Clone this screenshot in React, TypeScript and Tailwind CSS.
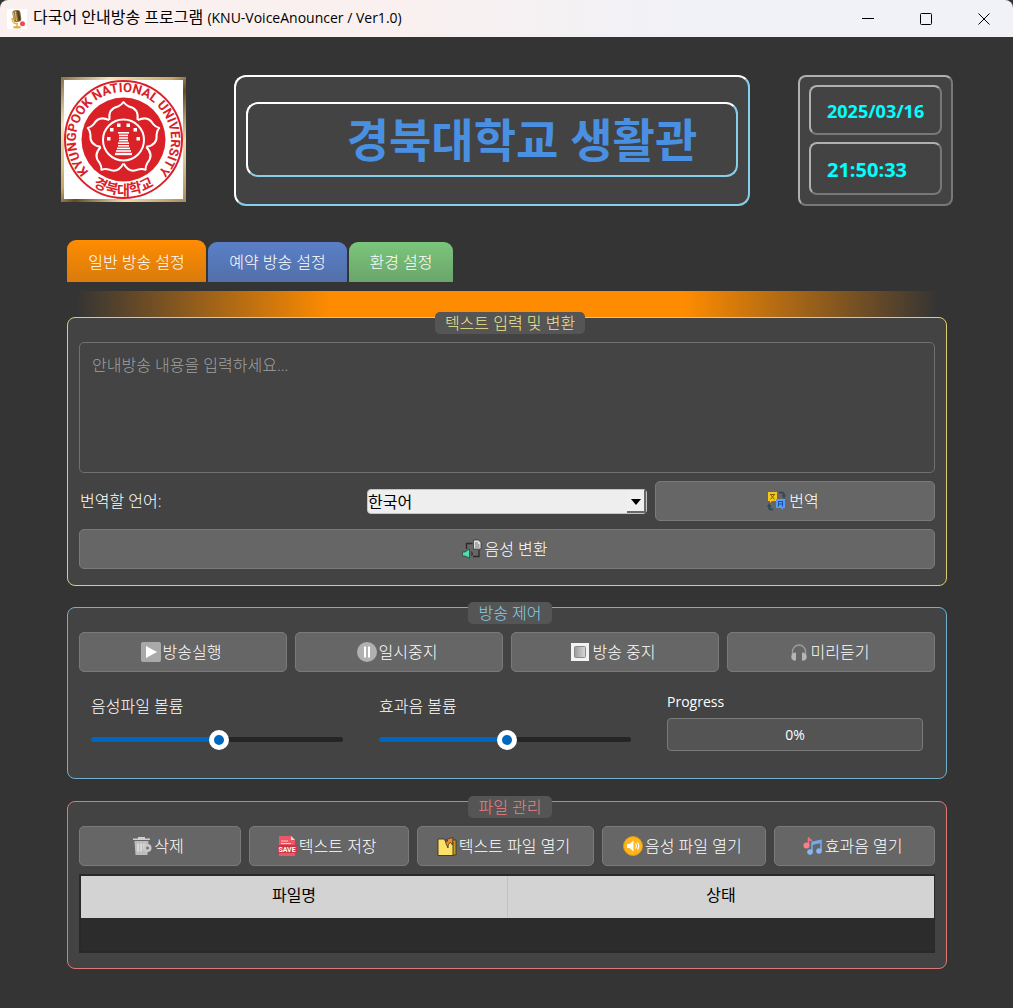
import { useState } from "react";
import type { ReactNode } from "react";

const SANS = "font-['Open_Sans','Noto_Sans_CJK_KR',sans-serif]";

function MicIcon() {
  return (
    <svg viewBox="0 0 20 20" className="size-5 shrink-0" aria-hidden="true">
      <rect width="20" height="20" fill="#fff" />
      <g transform="rotate(-8 10 8)">
        <rect x="6" y="1" width="8" height="12" rx="3" fill="#8a6a3a" />
        <path d="M7 3v8M9 2v10" stroke="#d9b35c" strokeWidth="1.2" />
        <path d="M12 2v10" stroke="#4a3c28" strokeWidth="2" />
      </g>
      <path d="M5 9c0 5 3 6 6 5.500M10 14v4" stroke="#e5b44c" strokeWidth="1.500" fill="none" />
      <ellipse cx="10" cy="18.300" rx="4" ry="1.200" fill="#e0ad45" />
      <circle cx="15.500" cy="14.800" r="2.500" fill="#ee4a55" />
    </svg>
  );
}

function Seal() {
  const petals = [0, 72, 144, 216, 288];
  return (
    <svg viewBox="0 0 125 125" className="size-[125px] shrink-0" role="img" aria-label="경북대학교">
      <defs>
        <linearGradient id="gold" x1="0" y1="0" x2="1" y2="1">
          <stop offset="0" stopColor="#8a7045" />
          <stop offset="0.200" stopColor="#f6e3b8" />
          <stop offset="0.450" stopColor="#c9a566" />
          <stop offset="0.550" stopColor="#5e4a2b" />
          <stop offset="0.750" stopColor="#f3dcae" />
          <stop offset="1" stopColor="#a98a55" />
        </linearGradient>
        <path id="arcTop" d="M27.500 94.600 A47.500 47.500 0 1 1 97.500 94.600" />
        <path id="arcBottom" d="M22 100 A55.500 55.500 0 0 0 103 100" />
      </defs>
      <rect width="125" height="125" fill="url(#gold)" />
      <rect x="3" y="3" width="119" height="119" fill="#fff" />
      <circle cx="62.500" cy="62.500" r="58.500" fill="#fff" stroke="#da2128" strokeWidth="2" />
      <circle cx="62.500" cy="62.500" r="42" fill="#da2128" />
      <g fill="none" stroke="#fff" strokeWidth="2" strokeLinejoin="round">
        {petals.map((a) => (
          <path
            key={a}
            transform={`rotate(${a} 62.500 62.500)`}
            d="M48.500 43 C47.500 36 50 31 57 29.500 Q60.500 28 62.500 25 Q64.500 28 68 29.500 C75 31 77.500 36 76.500 43"
          />
        ))}
      </g>
      <circle cx="62.500" cy="63" r="20.500" fill="#da2128" stroke="#fff" strokeWidth="2" />
      <g fill="#fff">
        <rect x="57" y="55" width="11" height="1.600" />
        <rect x="58" y="57.600" width="9" height="1.600" />
        <rect x="58" y="60.200" width="9" height="1.600" />
        <rect x="58" y="62.800" width="9" height="1.600" />
        <rect x="57" y="65.400" width="11" height="1.600" />
        <rect x="57" y="68" width="11" height="1.600" />
        <rect x="56" y="70.600" width="13" height="1.600" />
        <rect x="55" y="73.200" width="15" height="1.600" />
        <rect x="54" y="75.800" width="17" height="2.400" />
        <rect x="46" y="60" width="3.500" height="3.500" />
        <rect x="49" y="51" width="3.500" height="3.500" />
        <rect x="56" y="46.500" width="3.500" height="3.500" />
        <rect x="65.500" y="46.500" width="3.500" height="3.500" />
        <rect x="72.500" y="51" width="3.500" height="3.500" />
        <rect x="75.500" y="60" width="3.500" height="3.500" />
      </g>
      <text fill="#da2128" fontSize="13" fontWeight="700" fontFamily="Roboto, sans-serif" textAnchor="middle">
        <textPath href="#arcTop" startOffset="50%">KYUNGPOOK NATIONAL UNIVERSITY</textPath>
      </text>
      <text fill="#da2128" fontSize="14" fontWeight="700" fontFamily="'Noto Sans CJK KR', sans-serif" textAnchor="middle">
        <textPath href="#arcBottom" startOffset="50%">경북대학교</textPath>
      </text>
    </svg>
  );
}

function Icon({ children }: { children: ReactNode }) {
  return (
    <svg viewBox="0 0 20 20" className="size-5 shrink-0" aria-hidden="true">
      {children}
    </svg>
  );
}

const translateIcon = (
  <Icon>
    <path d="M1 1h9v9H5l-2 2v-2H1z" fill="#f5c61d" />
    <path d="M3 3.500h5M3.500 8.500l4-5M3.500 3.500l4 5" stroke="#7a6410" strokeWidth="1" fill="none" />
    <path d="M9 8h9v9h-2v2l-2-2H9z" fill="#5b9bf8" />
    <path d="M11.500 15.500v-5h4v5M11.500 13h4" stroke="#1e4fa0" strokeWidth="1.100" fill="none" />
    <path d="M12 1.500h3q2 0 2 3.500M15.500 4l1.500 2 1-2M6 18.500H4q-2 0-2-3M1 16l1-2 1.500 2" stroke="#2f4a5c" strokeWidth="2" fill="none" />
  </Icon>
);

const speechIcon = (
  <Icon>
    <path d="M4.500 10V4.500h6M17 11v6.500h-6" stroke="#2b2b2b" strokeWidth="1.300" fill="none" />
    <path d="M11.500 1h5l2.500 2.500V10h-7.500z" fill="#e3e3e3" stroke="#333" strokeWidth="0.800" />
    <path d="M13 4h3M13 6h4.500M13 8h4.500" stroke="#666" strokeWidth="0.900" />
    <path d="M0.500 13h2.500L7.500 10v9L3 17H0.500z" fill="#4fe0ae" stroke="#23483c" strokeWidth="0.800" />
    <path d="M9.500 12.500q1.500 2 0 4" stroke="#2b2b2b" strokeWidth="1.200" fill="none" />
  </Icon>
);

const playIcon = (
  <Icon>
    <rect width="20" height="20" rx="2" fill="#a9a9a9" />
    <path d="M5 4v12l11-6z" fill="#fff" />
  </Icon>
);

const pauseIcon = (
  <Icon>
    <circle cx="10" cy="10" r="10" fill="#b1b1b1" />
    <path d="M8 4.500v11M12 4.500v11" stroke="#fff" strokeWidth="2" />
  </Icon>
);

const stopIcon = (
  <Icon>
    <defs>
      <linearGradient id="stopFill">
        <stop offset="0" stopColor="#9a9a9a" />
        <stop offset="1" stopColor="#d8d8d8" />
      </linearGradient>
    </defs>
    <rect x="1" y="1" width="18" height="18" fill="#f3f3f3" />
    <rect x="4.500" y="4.500" width="11" height="11" rx="1" fill="url(#stopFill)" stroke="#8a8a8a" />
  </Icon>
);

const headphoneIcon = (
  <Icon>
    <path d="M3.500 13V9.500a6.500 6.500 0 0 1 13 0V13" stroke="#9c9c9c" strokeWidth="1.400" fill="none" />
    <path d="M7 10.500v8H4.500A3.500 4 0 0 1 4.500 11zM13 10.500v8h2.500a3.500 4 0 0 0 0-7.500z" fill="#b5b5b5" />
  </Icon>
);

const trashIcon = (
  <Icon>
    <path d="M1 4V2.500h5V1h7v1.500h5V4z" fill="#cfcfcf" />
    <path d="M2.500 5h14L15.500 19h-12z" fill="#bdbdbd" />
    <path d="M6 7.500v8M9 7.500v8M12 7.500v6" stroke="#eee" strokeWidth="1.100" />
    <circle cx="15.500" cy="12" r="4" fill="#c9c9c9" />
    <circle cx="15.500" cy="12" r="1.500" fill="#777" />
  </Icon>
);

const saveIcon = (
  <Icon>
    <path d="M2 0h12l4 4v16H2z" fill="#ec5766" />
    <path d="M14 0l4 4h-4z" fill="#f7d6d8" />
    <path d="M4 5h7M4 7.500h10" stroke="#f8c9cd" strokeWidth="1" />
    <rect y="9" width="20" height="8" rx="1" fill="#c9364a" />
    <text x="10" y="15.500" fontSize="7" fontWeight="700" fontFamily="Roboto, sans-serif" fill="#fff" textAnchor="middle">
      SAVE
    </text>
  </Icon>
);

const folderIcon = (
  <Icon>
    <path d="M12 4h7v15h-5z" fill="#c79a1e" stroke="#3a3320" strokeWidth="0.800" />
    <path d="M1 3h6l2 3h7v13.500H1z" fill="#fbe266" stroke="#3a3320" strokeWidth="0.900" />
    <path d="M8.500 6.500l2.500 5.500c0-3 .5-5 2.500-5.500l2 2.500.5-7.500-7 2 2 1z" fill="#f08a2c" stroke="#3a3320" strokeWidth="0.800" strokeLinejoin="round" />
  </Icon>
);

const speakerIcon = (
  <Icon>
    <circle cx="10" cy="10" r="9.500" fill="#ffb61c" stroke="#d69a1a" />
    <path d="M4 8h2.500L10.500 4.500v11L6.500 12H4z" fill="#fff" />
    <path d="M12.500 7.500q1.800 2.500 0 5M14.500 6.500q2.500 3.500 0 7" stroke="#fff" strokeWidth="1.200" fill="none" />
  </Icon>
);

const notesIcon = (
  <Icon>
    <path d="M5.500 9.500V1.500q1 3 3.500 3" stroke="#f2717c" strokeWidth="1.600" fill="none" />
    <circle cx="3.500" cy="9.500" r="3" fill="#f98088" />
    <path d="M9 16V6.500l9-2V14.500" stroke="#74a9ee" strokeWidth="1.600" fill="none" />
    <path d="M9 6l9-2v3l-9 2z" fill="#74a9ee" />
    <circle cx="7" cy="16" r="2.800" fill="#85b6f5" />
    <circle cx="16" cy="15" r="2.800" fill="#85b6f5" />
  </Icon>
);

function ActionButton({ icon, children }: { icon: ReactNode; children: ReactNode }) {
  return (
    <button
      type="button"
      className="flex h-10 w-full items-center justify-center gap-0.5 rounded-[5px] border border-[#7a7a7a] bg-[#666] pr-1 text-white hover:bg-[#707070]"
    >
      {icon}
      <span className="whitespace-nowrap">{children}</span>
    </button>
  );
}

function Panel({ title, tone, className, children }: { title: string; tone: string; className: string; children: ReactNode }) {
  return (
    <section className={`flex flex-col gap-2 rounded-lg border bg-[#434343] px-[11px] ${tone} ${className}`}>
      <h2 className="relative z-10 -mt-1.5 ml-1.5 flex h-[22px] items-center self-center rounded-[5px] bg-[#555] px-2.5">{title}</h2>
      {children}
    </section>
  );
}

function Volume({ id, label }: { id: string; label: string }) {
  const [value, setValue] = useState(51);
  return (
    <div className="flex flex-col px-3 pt-2">
      <label htmlFor={id} className="leading-6">
        {label}
      </label>
      <input
        id={id}
        type="range"
        min={0}
        max={100}
        value={value}
        onChange={(e) => setValue(Number(e.target.value))}
        style={{ backgroundSize: `${value}% 100%` }}
        className="mt-[19px] mr-1 h-[5px] appearance-none rounded-sm bg-[#252525] bg-linear-to-r from-[#0067c0] to-[#0067c0] bg-no-repeat [&::-webkit-slider-thumb]:size-5 [&::-webkit-slider-thumb]:appearance-none [&::-webkit-slider-thumb]:rounded-full [&::-webkit-slider-thumb]:border-[5px] [&::-webkit-slider-thumb]:border-white [&::-webkit-slider-thumb]:bg-[#0067c0]"
      />
    </div>
  );
}

export default function App() {
  return (
    <div className={`min-h-screen bg-[#343434] text-base font-light text-white ${SANS}`}>
      <header className="flex h-[37px] items-center rounded-t-lg bg-linear-to-r from-[#f9f0ef] from-40% to-[#f0f2f8] to-70% pl-[7px] text-black">
        <MicIcon />
        <h1 className="ml-1.5 flex-1 pb-1 font-normal">
          다국어 안내방송 프로그램 <span className="text-sm">(KNU-VoiceAnouncer / Ver1.0)</span>
        </h1>
        <button type="button" aria-label="최소화" className="flex h-full w-[58px] items-center justify-center">
          <svg viewBox="0 0 12 12" className="size-3" fill="none" stroke="#000">
            <path d="M0 5.500h12" />
          </svg>
        </button>
        <button type="button" aria-label="최대화" className="flex h-full w-[58px] items-center justify-center">
          <svg viewBox="0 0 12 12" className="size-3" fill="none" stroke="#000">
            <rect x="0.500" y="0.500" width="11" height="11" rx="1" />
          </svg>
        </button>
        <button type="button" aria-label="닫기" className="flex h-full w-[58px] items-center justify-center">
          <svg viewBox="0 0 12 12" className="size-3" fill="none" stroke="#000">
            <path d="M0.500 0.500l11 11M11.500 0.500l-11 11" />
          </svg>
        </button>
      </header>

      <main>
        <div className="flex items-start gap-12 pt-[38px] pr-[60px] pl-[61px]">
          <div className="pt-0.5">
            <Seal />
          </div>
          <div className="flex h-[131px] min-w-0 flex-1 items-start rounded-xl border-2 border-t-white border-r-[#87ceeb] border-b-[#87ceeb] border-l-white bg-[#434343] px-[10px] pt-[25px]">
            <div className="flex h-[75px] w-full items-center justify-center rounded-xl border-2 border-t-white border-r-[#87ceeb] border-b-[#87ceeb] border-l-white pb-0.5 pl-[60px]">
              <p className="text-[46px] leading-none font-bold whitespace-nowrap text-[#4a90e2]">경북대학교 생활관</p>
            </div>
          </div>
          <div className="flex w-[155px] shrink-0 flex-col gap-[7px] rounded-lg border-2 border-t-[#b0b0b0] border-r-[#787878] border-b-[#787878] border-l-[#b0b0b0] bg-[#434343] p-[9px] pt-2 font-bold text-[#0ff]">
            <time className="flex h-[50px] items-center rounded-lg border-2 border-t-[#b0b0b0] border-r-[#787878] border-b-[#787878] border-l-[#b0b0b0] pt-0.5 pl-4 text-lg">
              2025/03/16
            </time>
            <time className="flex h-[53px] items-center rounded-lg border-2 border-t-[#b0b0b0] border-r-[#787878] border-b-[#787878] border-l-[#b0b0b0] pt-0.5 pl-4 text-xl">
              21:50:33
            </time>
          </div>
        </div>

        <div className="pt-[34px] pr-[66px] pb-4 pl-[67px]">
          <nav className="flex h-[42px] items-end gap-0.5" role="tablist" aria-label="설정">
            <button type="button" role="tab" aria-selected="true" className="h-[42px] w-[139px] rounded-t-[9px] bg-linear-to-b from-[#ff8c00] to-[#d97b0c] pt-0.5">
              일반 방송 설정
            </button>
            <button type="button" role="tab" aria-selected="false" className="h-10 w-[139px] rounded-t-[9px] bg-linear-to-b from-[#5a7fc8] to-[#5270a8]">
              예약 방송 설정
            </button>
            <button type="button" role="tab" aria-selected="false" className="h-10 w-[104px] rounded-t-[9px] bg-linear-to-b from-[#7bc67b] to-[#6ba56b]">
              환경 설정
            </button>
          </nav>

          <div className="mt-[9px] h-[26px] bg-[linear-gradient(to_right,#343434_1%,#ff8c00_30%,#ff8c00_70%,#343434_99%)]" />

          <Panel title="텍스트 입력 및 변환" tone="border-[#d8cf70] text-[#f0e68c]" className="pb-4">
            <textarea
              aria-label="안내방송 내용"
              placeholder="안내방송 내용을 입력하세요..."
              className="h-[131px] resize-none rounded-[5px] border border-[#707070] bg-[#444] px-3 py-2.5 text-white placeholder:text-[#a0a0a0]"
            />
            <div className="grid grid-cols-3 items-center gap-2 text-white">
              <label htmlFor="lang" className="pl-px">
                번역할 언어:
              </label>
              <div className="relative flex h-[25px] rounded-sm border border-[#c4c4c4] bg-[#eee]">
                <select id="lang" className="w-full appearance-none pb-0.5 font-normal text-black">
                  <option>한국어</option>
                </select>
                <span className="pointer-events-none absolute inset-y-0 right-0 flex w-[19px] items-center justify-center border-r-2 border-b-2 border-[#696969] bg-[#f0f0f0] pt-1">
                  <svg viewBox="0 0 10 6" className="h-1.5 w-2.5">
                    <path d="M0 0h10L5 6z" fill="#000" />
                  </svg>
                </span>
              </div>
              <ActionButton icon={translateIcon}>번역</ActionButton>
            </div>
            <ActionButton icon={speechIcon}>음성 변환</ActionButton>
          </Panel>

          <Panel title="방송 제어" tone="border-[#6fb0cc] text-[#87ceeb]" className="mt-[21px] h-[172px]">
            <div className="grid grid-cols-4 gap-2">
              <ActionButton icon={playIcon}>방송실행</ActionButton>
              <ActionButton icon={pauseIcon}>일시중지</ActionButton>
              <ActionButton icon={stopIcon}>방송 중지</ActionButton>
              <ActionButton icon={headphoneIcon}>미리듣기</ActionButton>
            </div>
            <div className="grid grid-cols-3 gap-2 pt-1.5 text-white">
              <Volume id="voice-volume" label="음성파일 볼륨" />
              <Volume id="effect-volume" label="효과음 볼륨" />
              <div className="flex flex-col gap-1.5 px-3 pt-1.5">
                <span id="progress-label" className="text-sm leading-5 font-normal">
                  Progress
                </span>
                <div
                  role="progressbar"
                  aria-labelledby="progress-label"
                  aria-valuenow={0}
                  className="flex h-[33px] items-center justify-center rounded-sm border border-[#7a7a7a] bg-[#545454] text-sm font-normal"
                >
                  0%
                </div>
              </div>
            </div>
          </Panel>

          <Panel title="파일 관리" tone="border-[#e07878] text-[#f08080]" className="mt-[22px] pb-[15px]">
            <div className="grid grid-cols-[162fr_160fr_178fr_164fr_161fr] gap-2">
              <ActionButton icon={trashIcon}>삭제</ActionButton>
              <ActionButton icon={saveIcon}>텍스트 저장</ActionButton>
              <ActionButton icon={folderIcon}>텍스트 파일 열기</ActionButton>
              <ActionButton icon={speakerIcon}>음성 파일 열기</ActionButton>
              <ActionButton icon={notesIcon}>효과음 열기</ActionButton>
            </div>
            <div className="h-[79px] border-2 border-r border-[#292929] bg-[#2c2c2c]">
              <table className="w-full table-fixed border-collapse text-black">
                <thead>
                  <tr className="h-[42px] bg-[#d3d3d3]">
                    <th className="border-r border-[#c2c2c2] pb-1 font-normal">파일명</th>
                    <th className="pb-1 font-normal">상태</th>
                  </tr>
                </thead>
              </table>
            </div>
          </Panel>
        </div>
      </main>
    </div>
  );
}
